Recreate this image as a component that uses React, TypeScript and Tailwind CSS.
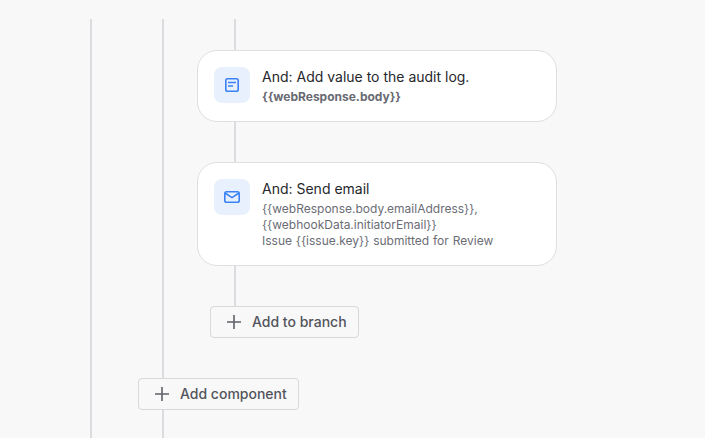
const font = "font-['Inter',sans-serif]"

function Plus() {
  return (
    <svg width="14" height="14" viewBox="0 0 14 14" fill="none" className="shrink-0">
      <path d="M7 0v14M0 7h14" stroke="#5f6168" strokeWidth="1.6" />
    </svg>
  )
}

function AddButton({ label, className }: { label: string; className: string }) {
  return (
    <button className={`flex h-8 items-center gap-[11px] rounded-[4px] border border-[#d8d8dc] bg-[#f8f8f8] pl-[16px] text-sm font-medium text-[#52545c] ${className}`}>
      <Plus />
      {label}
    </button>
  )
}

function Connector({ className }: { className: string }) {
  return <div className={`w-0.5 bg-[#dcdce0] ${className}`} />
}

function AuditIcon() {
  return (
    <svg width="14" height="14" viewBox="0 0 14 14" fill="none">
      <rect x="0.8" y="0.8" width="12.4" height="12.4" rx="1.8" stroke="#3b82f6" strokeWidth="1.6" />
      <path d="M3 4.5h8M3 8h5" stroke="#3b82f6" strokeWidth="1.4" />
    </svg>
  )
}

function MailIcon() {
  return (
    <svg width="16" height="12" viewBox="0 0 16 12" fill="none">
      <rect x="0.8" y="0.8" width="14.4" height="10.4" rx="1.8" stroke="#3b82f6" strokeWidth="1.6" />
      <path d="M1 2l7 4.6L15 2" stroke="#3b82f6" strokeWidth="1.6" />
    </svg>
  )
}

function Card({ icon, title, className, children }: { icon: React.ReactNode; title: string; className: string; children: React.ReactNode }) {
  return (
    <div className={`-ml-[37px] flex w-[360px] gap-3 rounded-[20px] border border-[#dfdfe2] bg-white pl-4 pt-4 ${className}`}>
      <div className="flex h-9 w-9 shrink-0 items-center justify-center rounded-lg bg-[#e8f0fe]">{icon}</div>
      <div>
        <div className="text-sm leading-5 text-[#26272c]">{title}</div>
        {children}
      </div>
    </div>
  )
}

export default function App() {
  return (
    <div className={`h-[438px] w-[705px] overflow-hidden bg-[#f8f8f8] pt-[19px] pl-[90px] ${font}`}>
      <div className="ml-0 h-full border-l-2 border-[#dcdce0] pl-[70px]">
        <div className="flex h-full flex-col border-l-2 border-[#dcdce0]">
          <div className="ml-[70px] flex flex-col items-start">
            <Connector className="h-[31px]" />
            <Card icon={<AuditIcon />} title="And: Add value to the audit log." className="h-[72px]">
              <div className="mt-[2px] text-xs leading-4 font-bold text-[#686a72]">{'{{webResponse.body}}'}</div>
            </Card>
            <Connector className="h-10" />
            <Card icon={<MailIcon />} title="And: Send email" className="h-[104px]">
              <div className="mt-[2px] text-xs leading-4 text-[#6b6d75]">
                {'{{webResponse.body.emailAddress}},'}
                <br />
                {'{{webhookData.initiatorEmail}}'}
                <br />
                <span className="[word-spacing:0.5px]">{'Issue {{issue.key}} submitted for Review'}</span>
              </div>
            </Card>
            <Connector className="h-10" />
            <AddButton label="Add to branch" className="-ml-6 w-[149px]" />
          </div>
          <AddButton label="Add component" className="mt-10 -ml-[26px] w-[161px]" />
        </div>
      </div>
    </div>
  )
}
